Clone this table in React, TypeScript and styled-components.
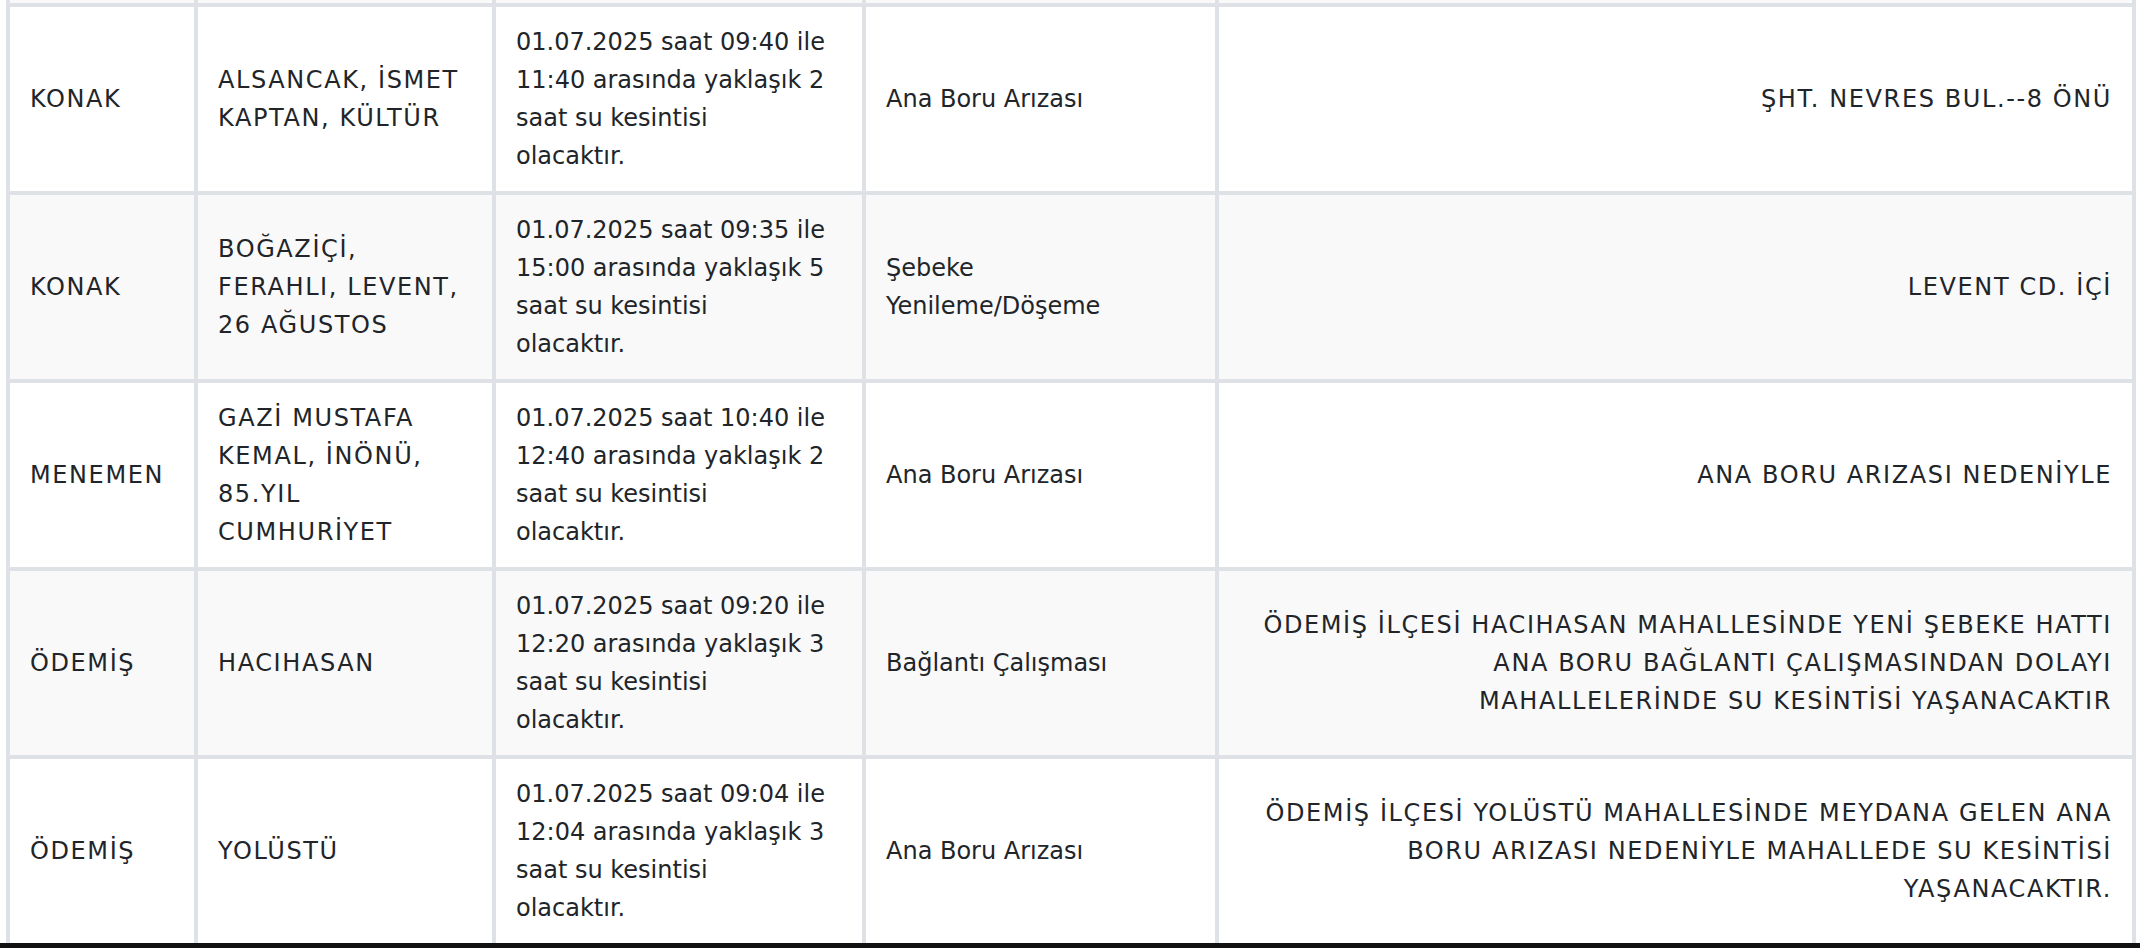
import styled, { createGlobalStyle } from "styled-components";

const GlobalStyle = createGlobalStyle`
  html, body {
    margin: 0;
    padding: 0;
    background: #fff;
  }
  body {
    font-family: "DejaVu Sans", "Open Sans", sans-serif;
    color: #212529;
    overflow: hidden;
  }
`;

const Page = styled.div`
  width: 2140px;
  height: 948px;
  display: flex;
  flex-direction: column;
  overflow: hidden;
`;

const TableWrap = styled.div`
  padding: 0 4px 0 6px;
  flex: 1;
  overflow: hidden;
`;

const Table = styled.div`
  border-left: 4px solid #dee2e6;
  display: flex;
  flex-direction: column;
`;

const Row = styled.div<{ $striped?: boolean; $peek?: boolean; $last?: boolean }>`
  display: grid;
  grid-template-columns: 188px 298px 370px 353px 1fr;
  background: ${(p) => (p.$striped ? "#f9f9f9" : "#fff")};
  border-bottom: ${(p) => (p.$last ? "none" : "4px solid #dee2e6")};
  height: ${(p) => (p.$peek ? "3px" : "auto")};
`;

const Cell = styled.div<{ $align?: "left" | "right"; $peek?: boolean; $caps?: boolean }>`
  border-right: 4px solid #dee2e6;
  padding: ${(p) => (p.$peek ? "0" : "16px 20px")};
  min-height: ${(p) => (p.$peek ? "0" : "152px")};
  display: flex;
  flex-direction: column;
  justify-content: center;
  align-items: ${(p) => (p.$align === "right" ? "flex-end" : "flex-start")};
  text-align: ${(p) => p.$align ?? "left"};
  font-size: 24px;
  line-height: 38px;
  letter-spacing: ${(p) => (p.$caps ? "1.6px" : "0")};
`;

const Line = styled.span`
  display: block;
  white-space: nowrap;
`;

const BottomBar = styled.div`
  height: 5px;
  background: #111;
  flex-shrink: 0;
`;

type Outage = {
  district: string;
  neighbourhoods: string[];
  period: string[];
  reason: string[];
  detail: string[];
};

const period = (start: string, end: string, hours: number) => [
  `01.07.2025 saat ${start} ile`,
  `${end} arasında yaklaşık ${hours}`,
  "saat su kesintisi",
  "olacaktır.",
];

const outages: Outage[] = [
  {
    district: "KONAK",
    neighbourhoods: ["ALSANCAK, İSMET", "KAPTAN, KÜLTÜR"],
    period: period("09:40", "11:40", 2),
    reason: ["Ana Boru Arızası"],
    detail: ["ŞHT. NEVRES BUL.--8 ÖNÜ"],
  },
  {
    district: "KONAK",
    neighbourhoods: ["BOĞAZİÇİ,", "FERAHLI, LEVENT,", "26 AĞUSTOS"],
    period: period("09:35", "15:00", 5),
    reason: ["Şebeke", "Yenileme/Döşeme"],
    detail: ["LEVENT CD. İÇİ"],
  },
  {
    district: "MENEMEN",
    neighbourhoods: ["GAZİ MUSTAFA", "KEMAL, İNÖNÜ,", "85.YIL", "CUMHURİYET"],
    period: period("10:40", "12:40", 2),
    reason: ["Ana Boru Arızası"],
    detail: ["ANA BORU ARIZASI NEDENİYLE"],
  },
  {
    district: "ÖDEMİŞ",
    neighbourhoods: ["HACIHASAN"],
    period: period("09:20", "12:20", 3),
    reason: ["Bağlantı Çalışması"],
    detail: [
      "ÖDEMİŞ İLÇESİ HACIHASAN MAHALLESİNDE YENİ ŞEBEKE HATTI",
      "ANA BORU BAĞLANTI ÇALIŞMASINDAN DOLAYI",
      "MAHALLELERİNDE SU KESİNTİSİ YAŞANACAKTIR",
    ],
  },
  {
    district: "ÖDEMİŞ",
    neighbourhoods: ["YOLÜSTÜ"],
    period: period("09:04", "12:04", 3),
    reason: ["Ana Boru Arızası"],
    detail: [
      "ÖDEMİŞ İLÇESİ YOLÜSTÜ MAHALLESİNDE MEYDANA GELEN ANA",
      "BORU ARIZASI NEDENİYLE MAHALLEDE SU KESİNTİSİ",
      "YAŞANACAKTIR.",
    ],
  },
];

const Lines = ({ items }: { items: string[] }) => (
  <>
    {items.map((text, i) => (
      <Line key={i}>{text}</Line>
    ))}
  </>
);

const App = () => {
  return (
    <Page>
      <GlobalStyle />
      <TableWrap>
        <Table>
          <Row $striped $peek>
            {[0, 1, 2, 3, 4].map((i) => (
              <Cell key={i} $peek />
            ))}
          </Row>
          {outages.map((o, i) => (
            <Row key={i} $striped={i % 2 === 1} $last={i === outages.length - 1}>
              <Cell $caps>
                <Line>{o.district}</Line>
              </Cell>
              <Cell $caps>
                <Lines items={o.neighbourhoods} />
              </Cell>
              <Cell>
                <Lines items={o.period} />
              </Cell>
              <Cell>
                <Lines items={o.reason} />
              </Cell>
              <Cell $align="right" $caps>
                <Lines items={o.detail} />
              </Cell>
            </Row>
          ))}
        </Table>
      </TableWrap>
      <BottomBar />
    </Page>
  );
};

export default App;
